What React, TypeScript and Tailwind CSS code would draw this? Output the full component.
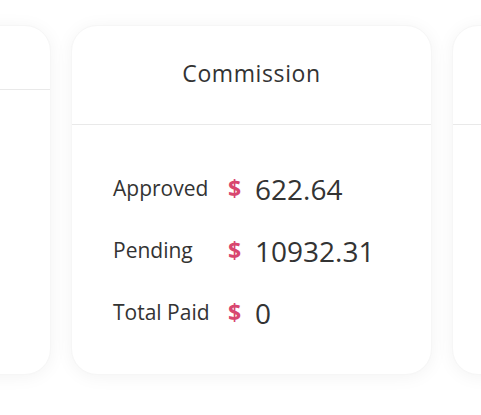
import React from "react";

const font = { fontFamily: '"Open Sans", "Noto Sans", sans-serif' };

function Card({ headerH, title, children }: { headerH: string; title?: string; children?: React.ReactNode }) {
  return (
    <div className="w-[361px] h-[350px] shrink-0 rounded-[26px] bg-white shadow-[0_2px_18px_rgba(0,0,0,0.05)] border border-[#f6f6f6] flex flex-col">
      <div className={`${headerH} border-b border-[#e9e9e9] flex items-center justify-center`}>
        {title && <span className="text-[23px] text-[#333] tracking-[0.6px] mt-[-4px]">{title}</span>}
      </div>
      {children}
    </div>
  );
}

export default function App() {
  const rows = [
    ["Approved", "622.64"],
    ["Pending", "10932.31"],
    ["Total Paid", "0"],
  ];
  return (
    <div className="w-[481px] h-[415px] bg-white overflow-hidden" style={font}>
      <div className="flex gap-[20px] ml-[-310px] pt-[25px]">
        <div className="w-[361px] h-[350px] shrink-0 rounded-[26px] bg-white shadow-[0_2px_18px_rgba(0,0,0,0.05)] border border-[#f6f6f6] flex flex-col">
          <div className="h-[64px] border-b border-[#e9e9e9]" />
        </div>
        <Card headerH="h-[99px]" title="Commission">
          <div className="pl-[41px] pt-[44px] flex flex-col gap-[22px]">
            {rows.map(([l, v]) => (
              <div key={l} className="flex items-center h-[40px]">
                <span className="w-[115px] text-[21px] text-[#333]">{l}</span>
                <span className="w-[27px] text-[23px] font-bold text-[#d8466f] mt-[-2px]">$</span>
                <span className="text-[28px] text-[#333] leading-none">{v}</span>
              </div>
            ))}
          </div>
        </Card>
        <Card headerH="h-[99px]" />
      </div>
    </div>
  );
}
